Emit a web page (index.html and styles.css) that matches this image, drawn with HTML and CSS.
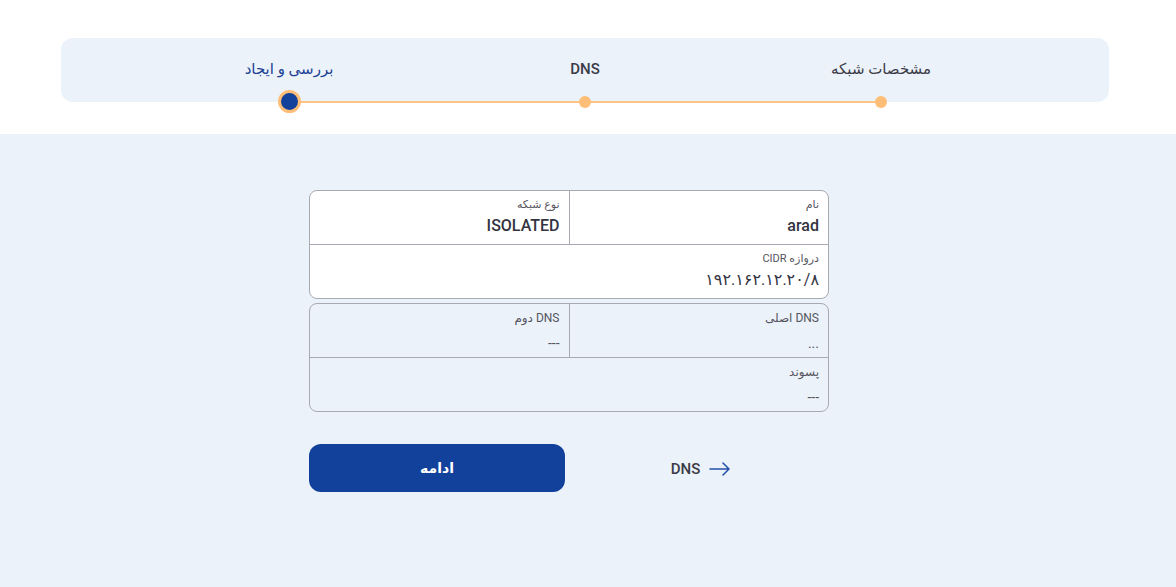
FILE: index.html
```html
<!DOCTYPE html>
<html lang="fa" dir="rtl">
<head>
<meta charset="utf-8">
<title>ایجاد شبکه</title>
<link rel="stylesheet" href="styles.css">
</head>
<body>
<header class="top">
  <div class="stepper">
    <div class="step done">
      <span class="step-label">مشخصات شبکه</span>
      <span class="dot"></span>
    </div>
    <div class="step done">
      <span class="step-label">DNS</span>
      <span class="dot"></span>
    </div>
    <div class="step active">
      <span class="step-label">بررسی و ایجاد</span>
      <span class="dot"></span>
    </div>
  </div>
</header>
<main class="main">
  <div class="content">
    <section class="card white">
      <div class="row two">
        <div class="cell">
          <span class="label">نام</span>
          <span class="value">arad</span>
        </div>
        <div class="cell">
          <span class="label">نوع شبکه</span>
          <span class="value">ISOLATED</span>
        </div>
      </div>
      <div class="row">
        <div class="cell">
          <span class="label">دروازه CIDR</span>
          <span class="value num"><bdi dir="ltr">۱۹۲.۱۶۲.۱۲.۲۰/۸</bdi></span>
        </div>
      </div>
    </section>
    <section class="card">
      <div class="row two">
        <div class="cell">
          <span class="label">DNS اصلی</span>
          <span class="value muted">...</span>
        </div>
        <div class="cell">
          <span class="label">DNS دوم</span>
          <span class="value muted">---</span>
        </div>
      </div>
      <div class="row">
        <div class="cell">
          <span class="label">پسوند</span>
          <span class="value muted">---</span>
        </div>
      </div>
    </section>
    <div class="actions">
      <a class="back" href="#">
        <svg class="arrow" width="22" height="14" viewBox="0 0 22 14" aria-hidden="true"><path d="M1 7H20M14 1L20 7L14 13" fill="none" stroke="#2450a8" stroke-width="1.5" stroke-linecap="round" stroke-linejoin="round"/></svg>
        <span>DNS</span>
      </a>
      <button class="primary" type="button">ادامه</button>
    </div>
  </div>
</main>
</body>
</html>
```

FILE: styles.css
```css
* { box-sizing: border-box; }
html, body { margin: 0; padding: 0; }
body {
  font-family: Roboto, "DejaVu Sans", sans-serif;
  color: #3b3b48;
  background: #ebf2f9;
  width: 1176px;
  height: 587px;
  overflow: hidden;
}
.top {
  background: #ffffff;
  height: 134px;
  padding: 38px 67px 0 61px;
}
.stepper {
  background: #ebf2f9;
  border-radius: 12px;
  height: 64px;
  display: grid;
  grid-template-columns: repeat(3, 296px);
  justify-content: center;
}
.step {
  position: relative;
  display: flex;
  flex-direction: column;
  align-items: center;
  padding-top: 21px;
}
.step-label {
  font-size: 15px;
  line-height: 20px;
  font-weight: 500;
  color: #3b3b48;
}
.step.active .step-label { color: #1a3f93; }
.dot {
  position: absolute;
  bottom: -6px;
  width: 12px;
  height: 12px;
  border-radius: 50%;
  background: #ffbe78;
  z-index: 2;
}
.step.active .dot {
  width: 23px;
  height: 23px;
  bottom: -11px;
  background: #12419b;
  border: 3px solid #ffbe78;
}
.step.done::after {
  content: "";
  position: absolute;
  bottom: -1px;
  right: 50%;
  width: 296px;
  height: 2px;
  background: #ffc385;
  z-index: 1;
}
.main {
  padding: 56px 347px 0 309px;
}
.content { width: 520px; }
.card {
  border: 1px solid #a9a9b3;
  border-radius: 8px;
  overflow: hidden;
  margin-bottom: 4px;
}
.card.white { background: #ffffff; }
.row { display: flex; height: 53px; }
.row + .row { border-top: 1px solid #a9a9b3; height: 54px; }
.row.two .cell { flex: 1 1 0; }
.row.two .cell + .cell { border-right: 1px solid #a9a9b3; }
.cell {
  flex: 1;
  display: flex;
  flex-direction: column;
  align-items: flex-start;
  padding: 6px 9px 0 8px;
}
.label {
  font-size: 11px;
  line-height: 16px;
  color: #555560;
}
.value {
  font-size: 16px;
  line-height: 22px;
  font-weight: 500;
  color: #33333f;
  margin-top: 2px;
}
.value.num { font-weight: 400; font-size: 16px; }
.card:not(.white) .label { font-size: 12px; }
.value.muted {
  font-size: 14px;
  font-weight: 400;
  color: #55555f;
  margin-top: 6px;
}
.actions {
  display: grid;
  grid-template-columns: 256px 256px;
  column-gap: 8px;
  margin-top: 32px;
  direction: ltr;
}
.primary {
  grid-column: 1;
  grid-row: 1;
  height: 48px;
  border: none;
  border-radius: 12px;
  background: #12419b;
  color: #ffffff;
  font-family: Roboto, "DejaVu Sans", sans-serif;
  font-size: 14px;
  font-weight: 700;
  direction: rtl;
}
.back {
  grid-column: 2;
  grid-row: 1;
  display: flex;
  align-items: center;
  justify-content: center;
  gap: 9px;
  text-decoration: none;
  color: #3b3b48;
  font-size: 15px;
  font-weight: 500;
  padding-top: 2px;
}
.back span { order: 1; }
.back .arrow { order: 2; }
```
